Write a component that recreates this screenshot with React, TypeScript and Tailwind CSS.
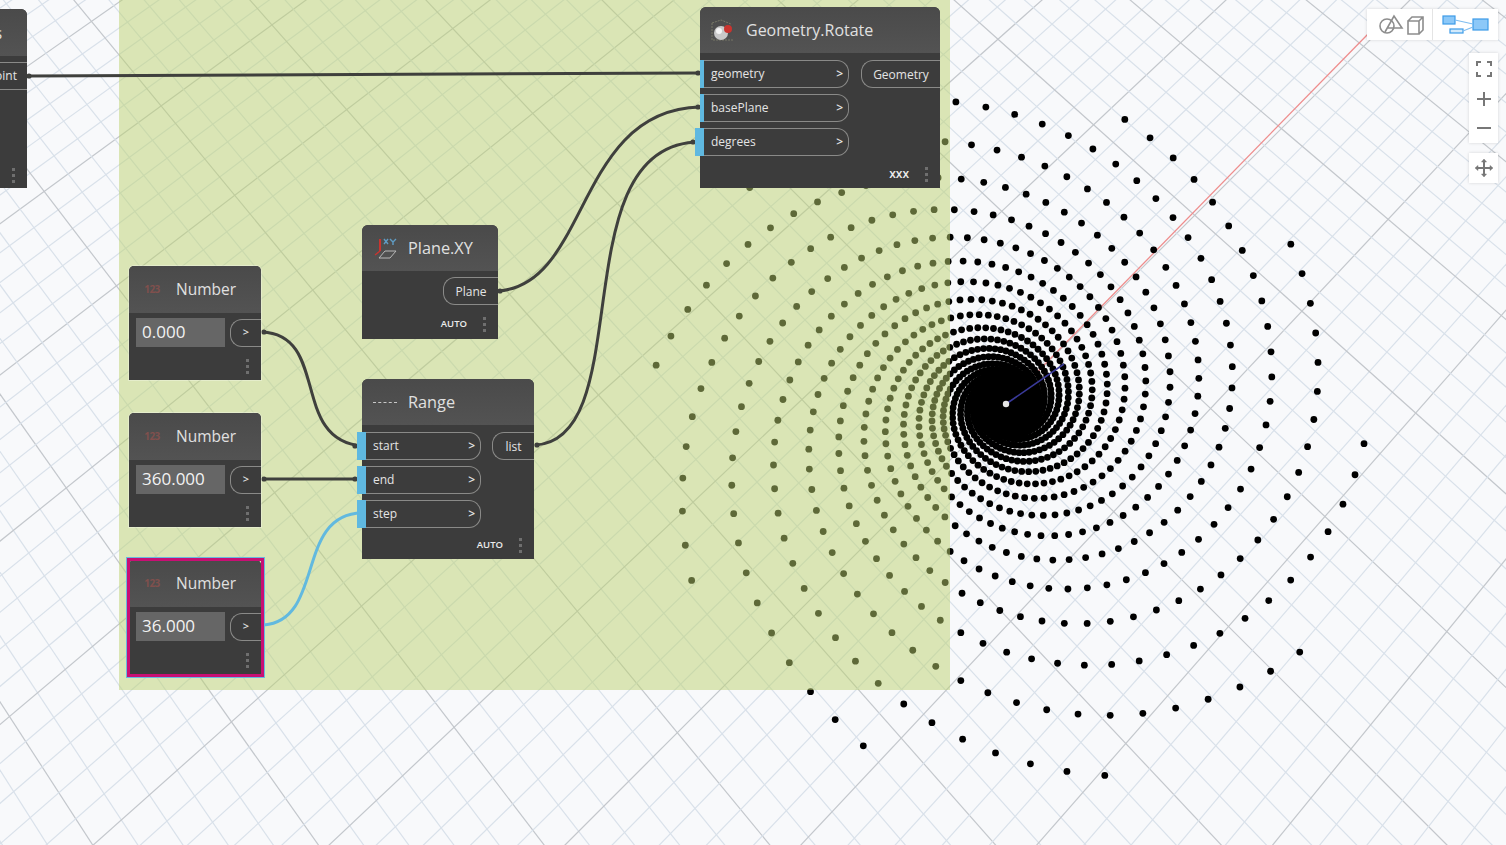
import React from "react";

const CX = 1006;
const CY = 404;
const PERSP = 3400;

// flat plane -> screen, plane y grows towards the viewer
const project = (x: number, y: number) => {
  const f = 1 / (1 - y / PERSP);
  return [CX + x * f, CY + y * f];
};

const gridPoint = (u: number, v: number) => {
  const x = (u + v) * 0.72;
  const y = (v - u) * 0.72;
  return project(x, y);
};

const gridLines = () => {
  const lines: { x1: number; y1: number; x2: number; y2: number; major: boolean }[] = [];
  const uStep = 27.75;
  const vStep = 29;
  const n = 70;
  const far = 2000;
  for (let i = -n; i <= n; i++) {
    const major = i % 5 === 0;
    const a = gridPoint(i * uStep, -far);
    const b = gridPoint(i * uStep, far);
    const c = gridPoint(-far, i * vStep);
    const d = gridPoint(far, i * vStep);
    lines.push({ x1: a[0], y1: a[1], x2: b[0], y2: b[1], major });
    lines.push({ x1: c[0], y1: c[1], x2: d[0], y2: d[1], major });
  }
  return lines;
};

const spiralDots = () => {
  const dots: number[][] = [];
  for (let arm = 0; arm < 10; arm++) {
    for (let i = 0; i < 170; i++) {
      const r = 354 * Math.pow(0.976, i);
      const deg = 6.6 + arm * 36 + i * 5.4;
      const t = (deg * Math.PI) / 180;
      const x = r * Math.cos(t);
      const y = r * Math.sin(t);
      // slight skew so the spiral leans like the 3d view
      dots.push(project(x + 0.055 * y, y * 0.965));
    }
  }
  return dots;
};

const Backdrop = () => (
  <svg className="absolute inset-0" width={1506} height={845}>
    {gridLines().map((l, i) => (
      <line
        key={i}
        x1={l.x1}
        y1={l.y1}
        x2={l.x2}
        y2={l.y2}
        stroke={l.major ? "#c3c7cc" : "#d9e1ea"}
        strokeWidth={1.2}
      />
    ))}
    <line x1={1006} y1={404} x2={1368} y2={34} stroke="#ee8d8d" strokeWidth={1.3} />
    {spiralDots().map((d, i) => (
      <circle key={i} cx={d[0]} cy={d[1]} r={3.4} fill="#000" />
    ))}
    <line x1={1006} y1={404} x2={1064} y2={364} stroke="#3a3a9a" strokeWidth={1.6} />
    <circle cx={1006} cy={404} r={3.2} fill="#e6e6e6" />
  </svg>
);

const nubs = [
  [29, 76],
  [698, 73],
  [698, 107],
  [693, 142],
  [500, 291],
  [537, 445],
  [264, 332],
  [264, 479],
  [355, 446],
  [355, 479],
];

const Wires = () => (
  <svg className="absolute inset-0" width={1506} height={845} fill="none">
    <g stroke="#3f403d" strokeWidth={3}>
      <path d="M29 76 L700 73" />
      <path d="M498 291 C590 285 575 110 700 107" />
      <path d="M535 445 C640 440 560 142 700 142" />
      <path d="M262 332 C330 335 290 440 362 446" />
      <path d="M262 479 L362 479" />
    </g>
    <path d="M264 625 C325 620 295 514 362 513" stroke="#62b9df" strokeWidth={3} />
    {nubs.map((n, i) => (
      <circle key={i} cx={n[0]} cy={n[1]} r={2.6} fill="#3f403d" />
    ))}
  </svg>
);

const Port = ({ name, out }: { name: string; out?: boolean }) => (
  <div className="relative h-[28px] pl-[4px] flex items-center">
    <div
      className={`absolute top-0 bottom-0 bg-[#5fb8e0] ${out ? "-left-[5px] w-[9px]" : "left-0 w-[4px]"}`}
    />
    <div className="flex-1 h-full flex items-center justify-between pl-[7px] pr-[5px] border border-l-0 border-[#8a8a88] rounded-r-[12px] text-[12px] text-[#e4e4e4]">
      <span>{name}</span>
      <span className="text-[12px] font-semibold">&gt;</span>
    </div>
  </div>
);

const OutPort = ({ name, width }: { name: string; width: string }) => (
  <div
    className={`h-[28px] pt-[1px] flex items-center justify-center border border-r-0 border-[#8a8a88] rounded-l-[12px] text-[12px] text-[#e4e4e4] ${width}`}
  >
    {name}
  </div>
);

const Dots = () => (
  <div className="flex flex-col gap-[3px]">
    <div className="w-[3px] h-[3px] bg-[#6f6f6f]" />
    <div className="w-[3px] h-[3px] bg-[#6f6f6f]" />
    <div className="w-[3px] h-[3px] bg-[#6f6f6f]" />
  </div>
);

const NumberIcon = () => (
  <span className="w-[22px] text-[10px] font-bold tracking-tighter text-[#80504d] text-center">123</span>
);

const NumberNode = ({ top, value }: { top: string; value: string }) => (
  <div className={`absolute left-[129px] w-[132px] h-[114px] bg-[#3c3c3c] rounded-t-[5px] shadow-[0_0_0_1px_rgba(255,255,255,0.3)] ${top}`}>
    <div className="h-[47px] bg-gradient-to-b from-[#4a4a4a] to-[#535353] rounded-t-[5px] flex items-center pl-[12px] gap-[13px] text-[15.5px] text-[#e0e0e0]">
      <NumberIcon />
      Number
    </div>
    <div className="flex items-center justify-between pl-[7px] mt-[5px]">
      <div className="w-[89px] h-[29px] pb-[2px] bg-[#666666] flex items-center pl-[6px] text-[17px] text-[#f2f2f2]">
        {value}
      </div>
      <div className="w-[31px] h-[28px] border border-r-0 border-[#8a8a88] rounded-l-[12px] flex items-center justify-center text-[11px] font-semibold text-[#e4e4e4]">
        &gt;
      </div>
    </div>
    <div className="flex justify-end pr-[12px] mt-[12px]">
      <Dots />
    </div>
  </div>
);

const Footer = ({ label, size, top }: { label: string; size: string; top: string }) => (
  <div className={`flex items-center justify-end gap-[16px] pr-[12px] ${top}`}>
    <span className={`font-semibold text-[#ececec] ${size}`}>{label}</span>
    <Dots />
  </div>
);

const ToolbarIcons = () => (
  <div className="absolute right-[8px] top-[9px] w-[131px] h-[31px] bg-white flex shadow-[0_0_3px_rgba(0,0,0,0.15)]">
    <div className="w-[66px] flex items-center justify-center border-r border-[#e4e4e4]">
      <svg width="48" height="24" viewBox="0 0 48 24" fill="none" stroke="#8d8d8d" strokeWidth="1.6">
        <circle cx="11" cy="13" r="7" />
        <path d="M9 19 L18 3 L26 15 L11 15" />
        <path d="M32 8 L43 8 L43 21 L32 21 Z M32 8 L36 4 L47 4 L47 17 L43 21 M43 8 L47 4" />
      </svg>
    </div>
    <div className="flex-1 flex items-center justify-center">
      <svg width="48" height="24" viewBox="0 0 48 24" fill="none" stroke="#3d9be8" strokeWidth="1.2">
        <rect x="1" y="3" width="12" height="8" fill="#8cc8f8" />
        <rect x="8" y="16" width="13" height="4" fill="#d3eafb" />
        <rect x="31" y="6" width="15" height="11" fill="#8cc8f8" />
        <path d="M13 7 L31 11 M21 18 L31 14" stroke="#7fbdf0" />
      </svg>
    </div>
  </div>
);

const ZoomControls = () => (
  <>
    <div className="absolute right-[8px] top-[53px] w-[29px] h-[90px] bg-white shadow-[0_0_3px_rgba(0,0,0,0.15)] flex flex-col items-center justify-between py-[8px]">
      <svg width="16" height="16" viewBox="0 0 16 16" fill="none" stroke="#777" strokeWidth="2">
        <path d="M1 5 L1 1 L5 1 M11 1 L15 1 L15 5 M15 11 L15 15 L11 15 M5 15 L1 15 L1 11" />
      </svg>
      <svg width="14" height="14" viewBox="0 0 14 14" stroke="#777" strokeWidth="2">
        <path d="M7 0 L7 14 M0 7 L14 7" />
      </svg>
      <svg width="14" height="14" viewBox="0 0 14 14" stroke="#777" strokeWidth="2">
        <path d="M0 7 L14 7" />
      </svg>
    </div>
    <div className="absolute right-[8px] top-[153px] w-[29px] h-[30px] bg-white shadow-[0_0_3px_rgba(0,0,0,0.15)] flex items-center justify-center">
      <svg width="18" height="18" viewBox="0 0 18 18" fill="#777" stroke="#777" strokeWidth="2">
        <path d="M9 2 L9 16 M2 9 L16 9" />
        <path d="M9 0 L11.5 3 L6.5 3 Z M9 18 L11.5 15 L6.5 15 Z M0 9 L3 6.5 L3 11.5 Z M18 9 L15 6.5 L15 11.5 Z" strokeWidth="0.5" />
      </svg>
    </div>
  </>
);

export default function App() {
  return (
    <div
      className="relative w-[1506px] h-[845px] overflow-hidden bg-[#f8f9fb]"
      style={{ fontFamily: '"Open Sans", "Noto Sans", sans-serif' }}
    >
      <Backdrop />
      {/* group */}
      <div className="absolute left-[119px] top-0 w-[831px] h-[690px] bg-[#bcd27080]" />
      <Wires />

      {/* node cut off by the left edge */}
      <div className="absolute -left-[40px] top-[9px] w-[67px] h-[179px] bg-[#3c3c3c] rounded-tr-[6px]">
        <div className="h-[47px] bg-gradient-to-b from-[#4a4a4a] to-[#535353] rounded-tr-[6px] flex items-center justify-end pr-[25px] text-[16px] text-[#e0e0e0]">
          s
        </div>
        <div className="mt-[6px] h-[28px] border-y border-[#8a8a88] flex items-center justify-end pr-[10px] text-[12px] text-[#e4e4e4]">
          Point
        </div>
        <div className="absolute right-[12px] bottom-[5px]">
          <Dots />
        </div>
      </div>

      {/* Geometry.Rotate */}
      <div className="absolute left-[700px] top-[7px] w-[240px] h-[181px] bg-[#3c3c3c] rounded-t-[6px]">
        <div className="h-[46px] bg-gradient-to-b from-[#4a4a4a] to-[#535353] rounded-t-[6px] flex items-center pl-[9px] gap-[10px] text-[16px] text-[#e0e0e0]">
          <svg width="27" height="25" viewBox="0 0 27 25">
            <path d="M3 5 L3 22 L24 22 M3 5 L12 2 L22 6" fill="none" stroke="#776" strokeDasharray="2 1" />
            <circle cx="12" cy="15" r="7" fill="#c9c9c9" />
            <circle cx="10" cy="13" r="3" fill="#f4f4f4" />
            <circle cx="19" cy="11" r="4" fill="#c9342f" />
          </svg>
          Geometry.Rotate
        </div>
        <div className="flex justify-between mt-[7px]">
          <div className="w-[149px] flex flex-col gap-[6px]">
            <Port name="geometry" />
            <Port name="basePlane" />
            <Port name="degrees" out />
          </div>
          <OutPort name="Geometry" width="w-[79px]" />
        </div>
        <Footer label="xxx" size="text-[12px]" top="mt-[9px]" />
      </div>

      {/* Plane.XY */}
      <div className="absolute left-[362px] top-[225px] w-[136px] h-[114px] bg-[#3c3c3c] rounded-t-[6px]">
        <div className="h-[46px] bg-gradient-to-b from-[#4a4a4a] to-[#535353] rounded-t-[6px] flex items-center pl-[12px] gap-[11px] text-[16.3px] text-[#e0e0e0]">
          <svg width="23" height="24" viewBox="0 0 23 24" fill="none">
            <path d="M6 3 L6 15" stroke="#c9342f" strokeWidth="2" />
            <path d="M5 22 L11 15 L22 15 L16 22 Z" stroke="#b9b9b9" />
            <path d="M1 19 L6 15" stroke="#c9342f" strokeWidth="1.5" />
            <path d="M10 3 L14 8 M14 3 L10 8 M16 3 L19 6 L22 3 M19 6 L19 9" stroke="#5f9cc4" strokeWidth="1.4" />
          </svg>
          Plane.XY
        </div>
        <div className="flex justify-end mt-[6px]">
          <OutPort name="Plane" width="w-[55px]" />
        </div>
        <Footer label="AUTO" size="text-[9.5px]" top="mt-[12px]" />
      </div>

      {/* Range */}
      <div className="absolute left-[362px] top-[379px] w-[172px] h-[180px] bg-[#3c3c3c] rounded-t-[6px]">
        <div className="h-[46px] bg-gradient-to-b from-[#4a4a4a] to-[#535353] rounded-t-[6px] flex items-center pl-[11px] gap-[11px] text-[16.3px] text-[#e0e0e0]">
          <span className="w-[24px] border-t border-dashed border-[#c8c8c8]" />
          Range
        </div>
        <div className="flex justify-between mt-[7px]">
          <div className="w-[119px] flex flex-col gap-[6px]">
            <Port name="start" out />
            <Port name="end" out />
            <Port name="step" out />
          </div>
          <OutPort name="list" width="w-[42px]" />
        </div>
        <Footer label="AUTO" size="text-[9.5px]" top="mt-[10px]" />
      </div>

      <NumberNode top="top-[266px]" value="0.000" />
      <NumberNode top="top-[413px]" value="360.000" />
      <NumberNode top="top-[560px]" value="36.000" />
      <div className="absolute left-[127px] top-[558px] w-[137px] h-[119px] border-[3px] border-[#c80f74] shadow-[0_0_0_1px_#67b9e0]" />

      <ToolbarIcons />
      <ZoomControls />
    </div>
  );
}
